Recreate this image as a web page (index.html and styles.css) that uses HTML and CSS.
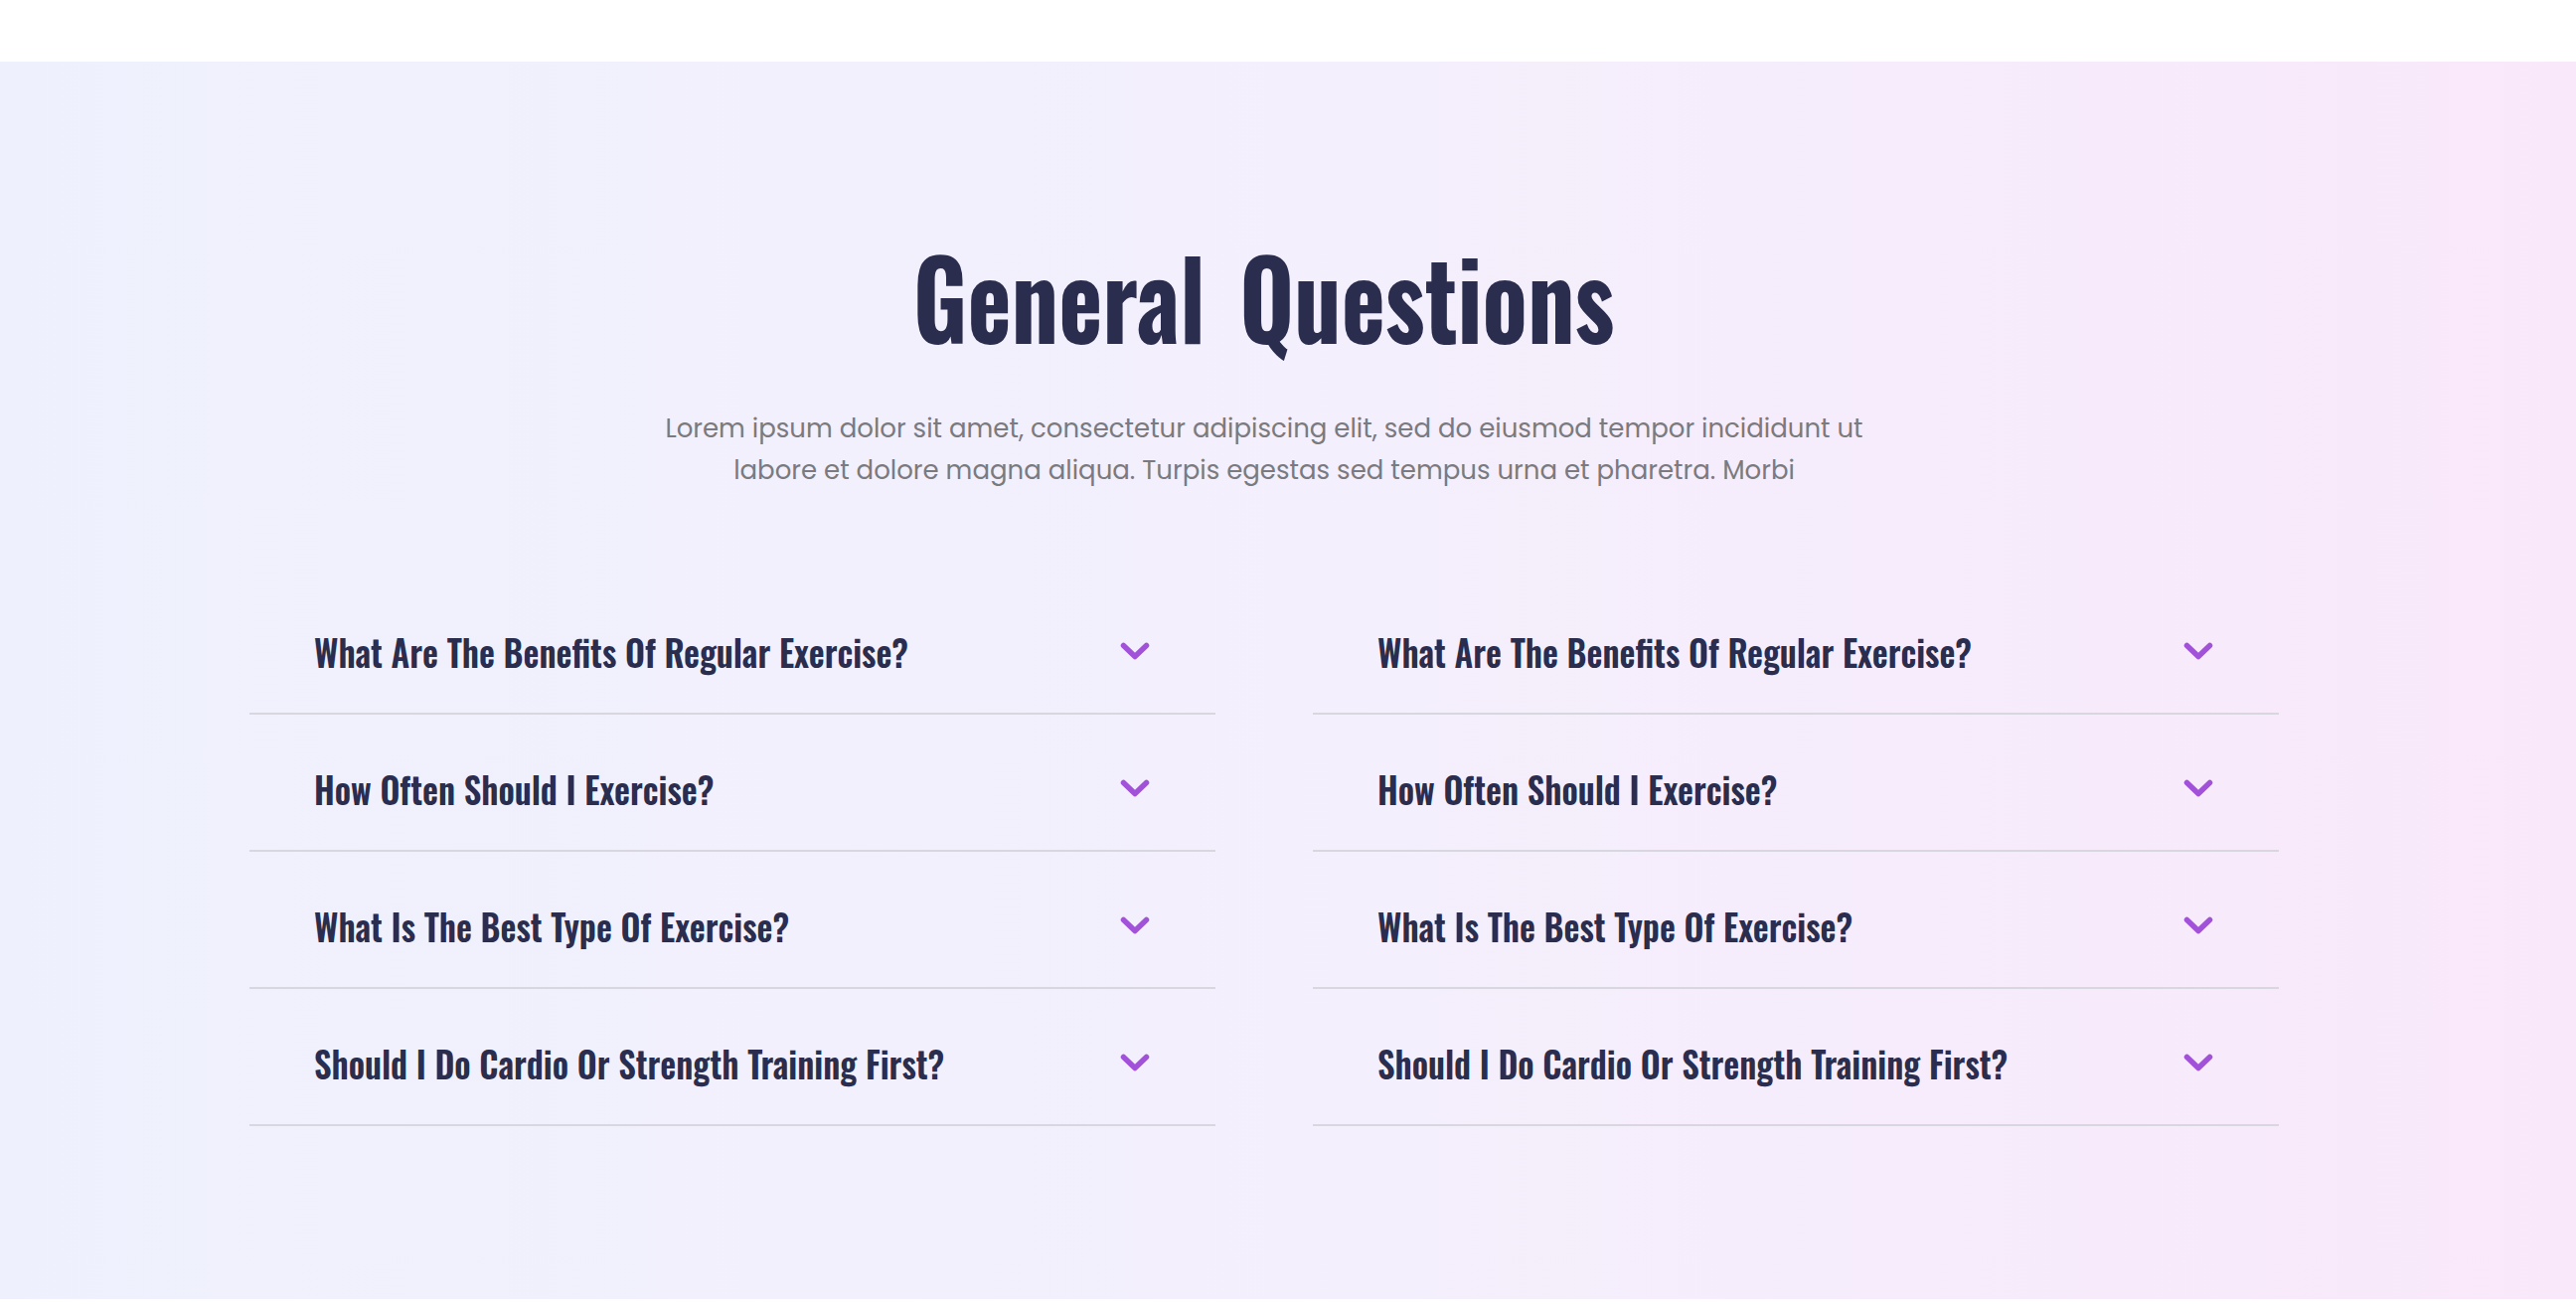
FILE: index.html
```html
<!DOCTYPE html>
<html lang="en">
<head>
<meta charset="utf-8">
<title>General Questions</title>
<link rel="stylesheet" href="styles.css">
</head>
<body>
<div class="topbar"></div>
<section class="faq">
  <div class="faq-inner">
    <h2 class="faq-title"><span class="faq-title-text">General Questions</span></h2>
    <p class="faq-lead">Lorem ipsum dolor sit amet, consectetur adipiscing elit, sed do eiusmod tempor incididunt ut<br>labore et dolore magna aliqua. Turpis egestas sed tempus urna et pharetra. Morbi</p>
    <div class="faq-grid">
      <div class="faq-col">
        <div class="faq-item"><span class="faq-q">What Are The Benefits Of Regular Exercise?</span><svg class="chev" viewBox="0 0 30 18"><polyline points="3.5,3.5 15,14.5 26.5,3.5"/></svg></div>
        <div class="faq-item"><span class="faq-q">How Often Should I Exercise?</span><svg class="chev" viewBox="0 0 30 18"><polyline points="3.5,3.5 15,14.5 26.5,3.5"/></svg></div>
        <div class="faq-item"><span class="faq-q">What Is The Best Type Of Exercise?</span><svg class="chev" viewBox="0 0 30 18"><polyline points="3.5,3.5 15,14.5 26.5,3.5"/></svg></div>
        <div class="faq-item"><span class="faq-q">Should I Do Cardio Or Strength Training First?</span><svg class="chev" viewBox="0 0 30 18"><polyline points="3.5,3.5 15,14.5 26.5,3.5"/></svg></div>
      </div>
      <div class="faq-col">
        <div class="faq-item"><span class="faq-q">What Are The Benefits Of Regular Exercise?</span><svg class="chev" viewBox="0 0 30 18"><polyline points="3.5,3.5 15,14.5 26.5,3.5"/></svg></div>
        <div class="faq-item"><span class="faq-q">How Often Should I Exercise?</span><svg class="chev" viewBox="0 0 30 18"><polyline points="3.5,3.5 15,14.5 26.5,3.5"/></svg></div>
        <div class="faq-item"><span class="faq-q">What Is The Best Type Of Exercise?</span><svg class="chev" viewBox="0 0 30 18"><polyline points="3.5,3.5 15,14.5 26.5,3.5"/></svg></div>
        <div class="faq-item"><span class="faq-q">Should I Do Cardio Or Strength Training First?</span><svg class="chev" viewBox="0 0 30 18"><polyline points="3.5,3.5 15,14.5 26.5,3.5"/></svg></div>
      </div>
    </div>
  </div>
</section>
</body>
</html>
```
FILE: styles.css
```css
html, body {
  margin: 0;
  padding: 0;
  background: #ffffff;
}

.topbar {
  height: 62px;
  background: #ffffff;
}

.faq {
  box-sizing: border-box;
  height: 1245px;
  padding: 0 48px 0 0;
  background: linear-gradient(90deg, #eef1fd 0%, #f2f0fc 35%, #f4effc 55%, #f9e8fa 100%);
}

.faq-inner {
  width: 2042px;
  margin: 0 auto;
  padding-top: 181px;
}

.faq-title {
  margin: 0;
  text-align: center;
  font-family: "Oswald", "Liberation Sans Narrow", "DejaVu Sans Condensed", sans-serif;
  font-weight: 700;
  font-size: 108px;
  line-height: 108px;
  color: #2a2d4e;
}

.faq-title-text {
  display: inline-block;
  word-spacing: 12px;
  transform: scaleX(0.87);
  transform-origin: center;
  white-space: nowrap;
}

.faq-lead {
  margin: 59px 0 0;
  text-align: center;
  font-family: "Poppins", "Open Sans", "Noto Sans", sans-serif;
  font-size: 26px;
  line-height: 42px;
  color: #7a7a7f;
}

.faq-grid {
  margin-top: 87px;
  display: grid;
  grid-template-columns: 972px 972px;
  column-gap: 98px;
}

.faq-item {
  display: flex;
  align-items: center;
  justify-content: space-between;
  padding: 49px 66px 37px 65px;
  border-bottom: 2px solid #d8d6df;
}

.faq-q {
  display: inline-block;
  font-family: "Oswald", "Liberation Sans Narrow", "DejaVu Sans Condensed", sans-serif;
  font-weight: 600;
  font-size: 38px;
  line-height: 50px;
  color: #2a2d4e;
  white-space: nowrap;
  transform: scaleX(0.912);
  transform-origin: left center;
}

.chev {
  width: 30px;
  height: 18px;
  flex: none;
}

.chev polyline {
  fill: none;
  stroke: #a252d9;
  stroke-width: 5.5;
  stroke-linecap: round;
  stroke-linejoin: round;
}
```
